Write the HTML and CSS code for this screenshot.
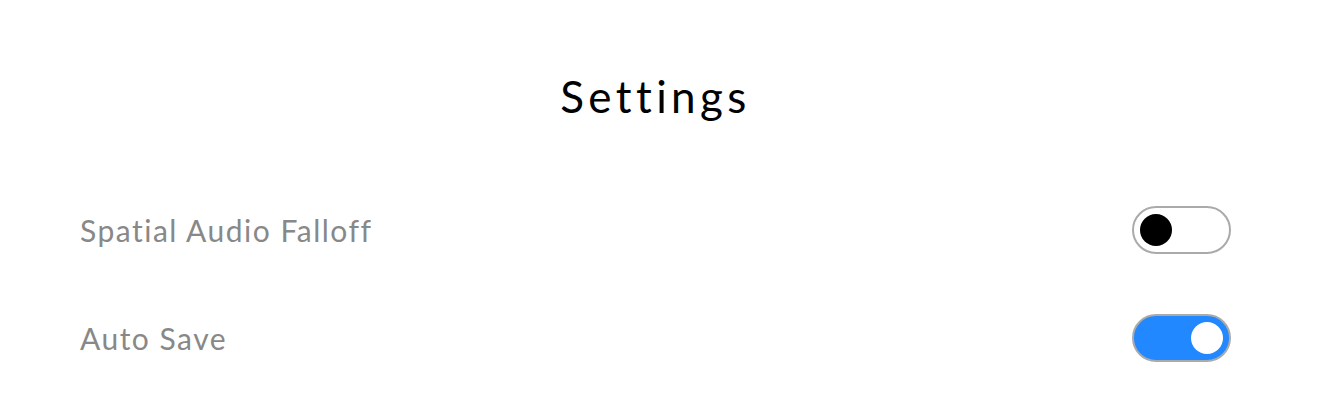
FILE: index.html
```html
<!DOCTYPE html>
<html>
<head>
<meta charset="utf-8">
<link rel="stylesheet" href="styles.css">
</head>
<body>
<div class="settings">
  <h1 class="title">Settings</h1>
  <div class="row">
    <span class="label">Spatial Audio Falloff</span>
    <span class="toggle off"><span class="knob"></span></span>
  </div>
  <div class="row">
    <span class="label">Auto Save</span>
    <span class="toggle on"><span class="knob"></span></span>
  </div>
</div>
</body>
</html>
```
FILE: styles.css
```css
html, body {
  margin: 0;
  padding: 0;
  background: #fff;
}
body {
  font-family: Lato, "Noto Sans", sans-serif;
}
.settings {
  width: 1151px;
  margin-left: 80px;
  padding-top: 66px;
  display: flex;
  flex-direction: column;
}
.title {
  margin: 0;
  text-align: center;
  font-size: 44px;
  font-weight: 400;
  letter-spacing: 4.4px;
  line-height: 60px;
  color: #000;
  margin-bottom: 74px;
}
.row {
  display: flex;
  justify-content: space-between;
  align-items: center;
  height: 60px;
  margin-bottom: 48px;
}
.label {
  font-size: 30px;
  color: #888;
  letter-spacing: 1.5px;
}
.toggle {
  box-sizing: border-box;
  width: 99px;
  height: 48px;
  border: 2px solid #aaa;
  border-radius: 24px;
  display: flex;
  align-items: center;
  padding: 0 6px;
}
.toggle.on {
  background: #2188ff;
  justify-content: flex-end;
}
.knob {
  width: 32px;
  height: 32px;
  border-radius: 50%;
}
.off .knob { background: #000; }
.on .knob { background: #fff; }
```
